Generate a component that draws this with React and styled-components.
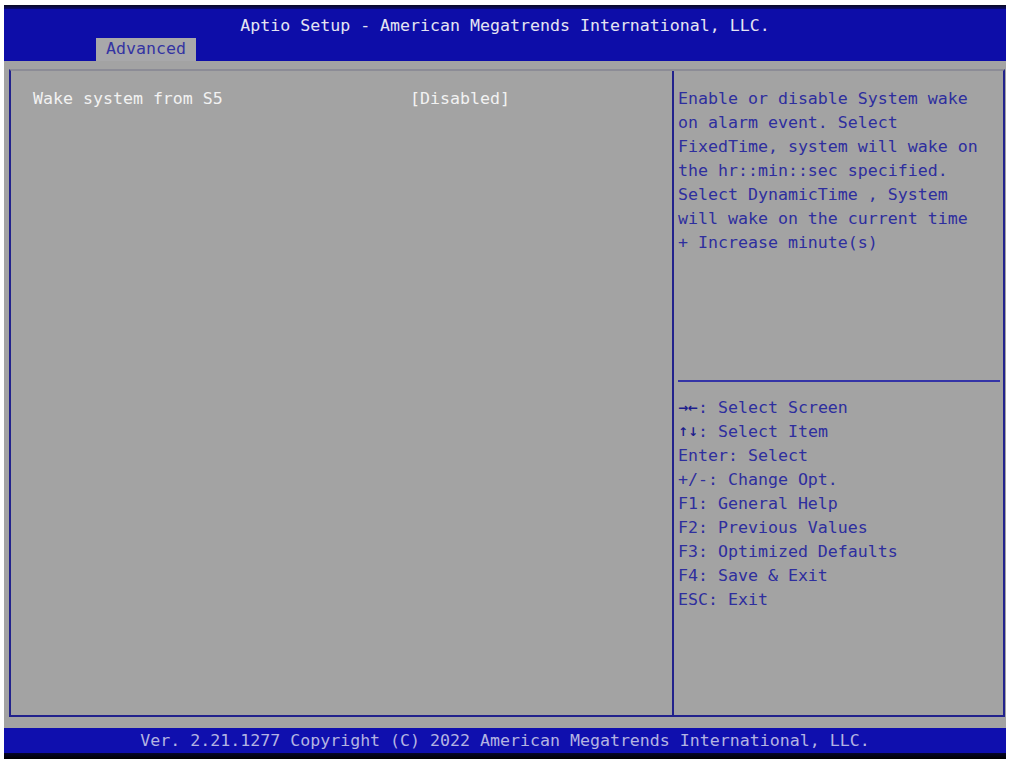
import React from "react";
import styled, { createGlobalStyle } from "styled-components";

const Global = createGlobalStyle`
  html, body { margin: 0; padding: 0; background: #ffffff; }
  body { font-family: "DejaVu Sans Mono", "Liberation Mono", monospace; }
`;

const Screen = styled.div`
  margin: 5px 0 0 4px;
  width: 1002px;
  height: 754px;
  display: flex;
  flex-direction: column;
  background: #a3a3a3;
  font-family: "DejaVu Sans Mono", "Liberation Mono", monospace;
  font-size: 16.6px;
  line-height: 24px;
`;

const TopEdge = styled.div`
  height: 4px;
  background: linear-gradient(#0a0a20, #0a0a70);
`;

const Header = styled.header`
  height: 52px;
  background: #0d0da8;
  display: flex;
  flex-direction: column;
`;

const Title = styled.div`
  height: 29px;
  padding-top: 5px;
  box-sizing: border-box;
  text-align: center;
  color: #e4e4f2;
  white-space: pre;
`;

const TabRow = styled.nav`
  flex: 1;
  display: flex;
  align-items: flex-end;
  padding-left: 92px;
`;

const Tab = styled.div`
  height: 23px;
  width: 100px;
  background: #a8a8aa;
  color: #3434a2;
  text-align: center;
  line-height: 22px;
`;

const Body = styled.main`
  flex: 1;
  display: flex;
  padding: 8px 1px 11px 5px;
  min-height: 0;
`;

const Panels = styled.div`
  flex: 1;
  display: flex;
  border-top: 2px solid #8c8c96;
  border-left: 2px solid #22228c;
  border-right: 2px solid #22228c;
  border-bottom: 2px solid #22228c;
`;

const SettingsPanel = styled.section`
  width: 663px;
  border-right: 2px solid #22228c;
  padding: 16px 0 0 22px;
  box-sizing: border-box;
`;

const SettingRow = styled.div`
  display: grid;
  grid-template-columns: 377px auto;
  color: #f2f2f2;
  white-space: pre;
`;

const HelpPanel = styled.aside`
  flex: 1;
  display: flex;
  flex-direction: column;
`;

const HelpText = styled.div`
  height: 309px;
  box-sizing: border-box;
  padding: 16px 0 0 4px;
  color: #2e2e9e;
`;

const Line = styled.div`
  white-space: pre;
  display: flex;
  align-items: center;
`;

const Rule = styled.hr`
  margin: 0 3px 0 4px;
  border: 0;
  height: 2px;
  background: #3434a6;
`;

const Keys = styled.div`
  padding: 14px 0 0 4px;
  color: #2e2e9e;
`;

const Arrow = styled.span`
  display: inline-flex;
  justify-content: space-between;
  width: 20px;
  color: #1c1c8c;
  font-family: "DejaVu Sans", sans-serif;
  font-weight: bold;
  font-size: 12px;
`;

const Footer = styled.footer`
  height: 25px;
  background: #0f0fae;
  color: #b4b4e2;
  text-align: center;
  line-height: 26px;
  white-space: pre;
`;

const BottomEdge = styled.div`
  height: 6px;
  background: linear-gradient(#05052a, #000000);
`;

const help = [
  "Enable or disable System wake",
  "on alarm event. Select",
  "FixedTime, system will wake on",
  "the hr::min::sec specified.",
  "Select DynamicTime , System",
  "will wake on the current time",
  "+ Increase minute(s)",
];

const keys = [
  [["→", "←"], ": Select Screen"],
  [["↑", "↓"], ": Select Item"],
  [null, "Enter: Select"],
  [null, "+/-: Change Opt."],
  [null, "F1: General Help"],
  [null, "F2: Previous Values"],
  [null, "F3: Optimized Defaults"],
  [null, "F4: Save & Exit"],
  [null, "ESC: Exit"],
];

export default function App() {
  return (
    <>
      <Global />
      <Screen>
        <TopEdge />
        <Header>
          <Title>Aptio Setup - American Megatrends International, LLC.</Title>
          <TabRow>
            <Tab>Advanced</Tab>
          </TabRow>
        </Header>
        <Body>
          <Panels>
            <SettingsPanel>
              <SettingRow>
                <span>Wake system from S5</span>
                <span>[Disabled]</span>
              </SettingRow>
            </SettingsPanel>
            <HelpPanel>
              <HelpText>
                {help.map((l) => (
                  <Line key={l}>{l}</Line>
                ))}
              </HelpText>
              <Rule />
              <Keys>
                {keys.map(([a, t]) => (
                  <Line key={t}>
                    {a && (
                      <Arrow>
                        <span>{a[0]}</span>
                        <span>{a[1]}</span>
                      </Arrow>
                    )}
                    {t}
                  </Line>
                ))}
              </Keys>
            </HelpPanel>
          </Panels>
        </Body>
        <Footer>Ver. 2.21.1277 Copyright (C) 2022 American Megatrends International, LLC.</Footer>
        <BottomEdge />
      </Screen>
    </>
  );
}
